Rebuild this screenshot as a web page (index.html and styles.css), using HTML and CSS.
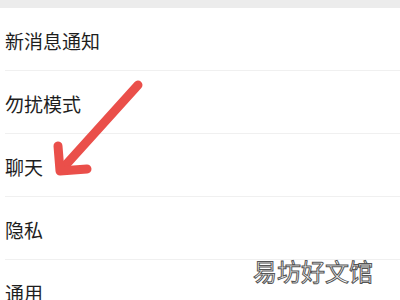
FILE: index.html
```html
<!DOCTYPE html>
<html>
  <head>
    <title>设置</title>
    <meta name="viewport" content="width=device-width, initial-scale=1" />
    <link rel="stylesheet" href="styles.css">
  </head>
  <body>
    <div class="topbar"></div>
    <ul class="menu">
      <li class="item">新消息通知</li>
      <li class="item">勿扰模式</li>
      <li class="item">聊天</li>
      <li class="item">隐私</li>
      <li class="item">通用</li>
    </ul>
    <svg class="arrow" width="400" height="300" viewBox="0 0 400 300">
      <path d="M138 85 L63 168" />
      <path d="M58 146 L60 171 L87 169" />
    </svg>
    <div class="watermark">易坊好文馆</div>
  </body>
</html>
```

FILE: styles.css
```css
html {
  font-family: "Noto Sans CJK SC", "Noto Sans", sans-serif;
}
body {
  margin: 0px;
  width: 400px;
  height: 300px;
  overflow: hidden;
  position: relative;
  background: #fff;
}
.topbar {
  height: 8px;
  background: #ececec;
}
.menu {
  list-style: none;
  margin: 0;
  padding: 0 0 0 5px;
}
.item {
  height: 63px;
  display: flex;
  align-items: center;
  padding-top: 3px;
  box-sizing: border-box;
  border-bottom: 1px solid #f0f0f0;
  font-size: 19px;
  color: #1e1e1e;
}
.arrow {
  position: absolute;
  left: 0;
  top: 0;
}
.arrow path {
  fill: none;
  stroke: #ea4f4a;
  stroke-width: 9;
  stroke-linecap: round;
  stroke-linejoin: round;
}
.watermark {
  position: absolute;
  left: 253px;
  top: 253px;
  font-size: 24px;
  color: #fff;
  -webkit-text-stroke: 1px #555;
}
```
